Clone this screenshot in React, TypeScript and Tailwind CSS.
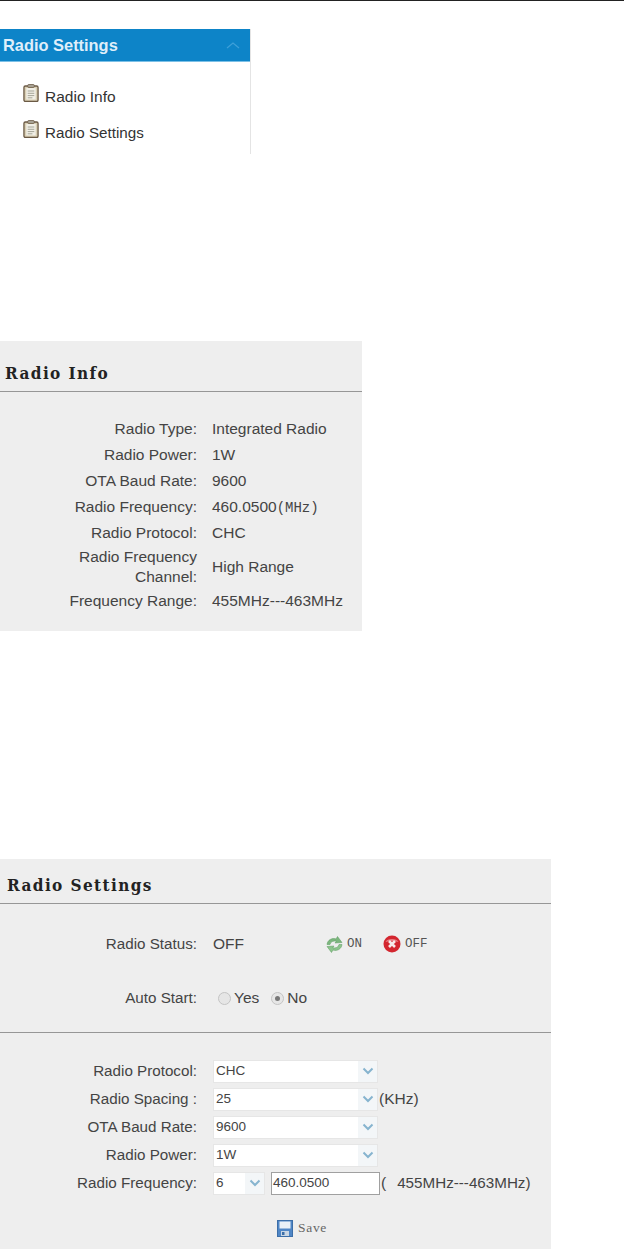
import * as React from "react";
import { FC, ReactNode } from "react";

const sans = "font-['Liberation_Sans',Arial,sans-serif]";

const ClipboardIcon: FC = () => (
  <svg width="16" height="18" viewBox="0 0 17 18" preserveAspectRatio="none" className="shrink-0">
    <rect x="1" y="2" width="15" height="15.5" rx="1.5" fill="#d9cfb4" stroke="#6b5a45" strokeWidth="1.4" />
    <rect x="3.5" y="4" width="10" height="11.5" fill="#f1efe6" />
    <rect x="5" y="0.5" width="7" height="3" rx="1" fill="#a8a294" stroke="#6b5a45" strokeWidth="0.8" />
    <path d="M5 7h7M5 9.3h7M5 11.6h7M5 13.8h5" stroke="#9a9a8c" strokeWidth="0.9" />
  </svg>
);

const Chevron: FC = () => (
  <svg width="12" height="8" viewBox="0 0 12 8">
    <path d="M1.5 1.5 6 6l4.5-4.5" fill="none" stroke="#86b4cf" strokeWidth="2" />
  </svg>
);

const RefreshIcon: FC = () => (
  <svg width="17" height="17" viewBox="0 0 17 17" className="shrink-0">
    <path d="M1 8.500C1.500 4 6 1.500 10 3l1.500-2.500L16 6.500l-7 .5 1.300-1.800C7.500 4.700 4.500 5.500 4 8.500Z" fill="#7cb67e" stroke="#5b9a5f" strokeWidth="0.5" />
    <path d="M16 8.500c-.5 4.500-5 7-9 5.500l-1.500 2.500L1 10.500l7-.5-1.300 1.800c2.800.5 5.800-.3 6.300-3.300Z" fill="#8cc48c" stroke="#5b9a5f" strokeWidth="0.5" />
  </svg>
);

const CloseIcon: FC = () => (
  <svg width="18" height="18" viewBox="0 0 18 18" className="shrink-0">
    <circle cx="9" cy="9" r="8.500" fill="#d3262f" />
    <path d="M2.500 7C4 3 14 3 15.500 7 12 5.500 6 5.500 2.500 7Z" fill="#ea7f84" />
    <path d="M6 6l6 6M12 6l-6 6" stroke="#f6eaea" strokeWidth="2.600" />
  </svg>
);

const SaveIcon: FC = () => (
  <svg width="16" height="17" viewBox="0 0 16 17" className="shrink-0">
    <rect x="0.500" y="0.500" width="15" height="16" fill="#4f86c6" stroke="#3c6ea8" />
    <rect x="2.500" y="1.500" width="11" height="7" fill="#e9f0f7" />
    <rect x="4" y="11" width="8" height="5" fill="#c9d6e4" />
    <rect x="5" y="12" width="2.500" height="3" fill="#3c6ea8" />
  </svg>
);

const RadioDot: FC<{ checked?: boolean }> = ({ checked }) => (
  <span className="flex h-[13px] w-[13px] items-center justify-center rounded-full border border-[#c4c4c4] bg-[#e6e6e6]">
    {checked && <span className="h-[5px] w-[5px] rounded-full bg-[#777]" />}
  </span>
);

const PanelTitle: FC<{ children: ReactNode; className: string }> = ({ children, className }) => (
  <div className={`border-b border-[#969696] font-['DejaVu_Serif_Condensed','DejaVu_Serif',serif] text-[17px] font-bold leading-[18px] tracking-[1.4px] text-[#222] ${className}`}>
    {children}
  </div>
);

const InfoRow: FC<{ label: ReactNode; children: ReactNode; className?: string }> = ({ label, children, className }) => (
  <div className={`flex items-center ${className ?? "h-[26px]"}`}>
    <div className="w-[197px] text-right leading-[20px] text-[#444]">{label}</div>
    <div className="ml-[15px] text-[#444]">{children}</div>
  </div>
);

const SelectBox: FC<{ value: string; className?: string }> = ({ value, className }) => (
  <div className={`flex h-[23px] items-center justify-between border border-[#e6e6e6] bg-white pl-[2px] text-[13.500px] text-[#444] ${className ?? "w-[165px]"}`}>
    <span>{value}</span>
    <span className="flex h-full w-[19px] items-center justify-center bg-[#f3f6f8]">
      <Chevron />
    </span>
  </div>
);

const FormRow: FC<{ label: string; children: ReactNode }> = ({ label, children }) => (
  <div className="flex h-[28px] items-center">
    <div className="w-[197px] text-right text-[15.200px] text-[#444]">{label}</div>
    <div className="ml-[16px] flex items-center">{children}</div>
  </div>
);

const App: FC = () => {
  return (
    <div className={`relative h-[1249px] w-[624px] overflow-hidden bg-white ${sans} text-[15.500px]`}>
      <div className="h-px bg-[#222]" />

      {/* side menu */}
      <div className="mt-[28px] h-[125px] w-[251px] border-r border-[#e4e4e4]">
        <div className="flex h-[33px] items-center justify-between border-b border-[#7cc0e6] bg-[#0d84c8] pl-[3px] pr-[10px]">
          <span className="text-[16.400px] font-bold text-[#dfeefa]">Radio Settings</span>
          <svg width="14" height="7" viewBox="0 0 14 7">
            <path d="M1 6 7 1l6 5" fill="none" stroke="#3d9fd8" strokeWidth="1.300" />
          </svg>
        </div>
        <div className="flex flex-col gap-[17px] pl-[23px] pt-[21px] text-[#333]">
          <div className="flex h-[19px] items-center gap-[6px]">
            <ClipboardIcon />
            <span className="pt-[8px]">Radio Info</span>
          </div>
          <div className="flex h-[19px] items-center gap-[6px]">
            <ClipboardIcon />
            <span className="pt-[9px] text-[15.200px]">Radio Settings</span>
          </div>
        </div>
      </div>

      {/* radio info */}
      <div className="mt-[187px] h-[290px] w-[362px] bg-[#eeeeee]">
        <PanelTitle className="pb-[9px] pl-[5px] pt-[23px]">Radio Info</PanelTitle>
        <div className="pt-[24px]">
          <InfoRow label="Radio Type:">Integrated Radio</InfoRow>
          <InfoRow label="Radio Power:">1W</InfoRow>
          <InfoRow label="OTA Baud Rate:">9600</InfoRow>
          <InfoRow label="Radio Frequency:">
            <span>460.0500</span>
            <span className="font-['Liberation_Mono',monospace] text-[14px]">(MHz)</span>
          </InfoRow>
          <InfoRow label="Radio Protocol:">CHC</InfoRow>
          <InfoRow className="h-[42px]" label={<>Radio Frequency<br />Channel:</>}>High Range</InfoRow>
          <InfoRow label="Frequency Range:">455MHz---463MHz</InfoRow>
        </div>
      </div>

      {/* radio settings */}
      <div className="mt-[228px] h-[390px] w-[551px] bg-[#eeeeee]">
        <PanelTitle className="pb-[9px] pl-[7px] pt-[17px]">Radio Settings</PanelTitle>
        <div className="h-[129px] border-b border-[#969696] pt-[27px]">
          <div className="flex h-[26px] items-center">
            <div className="w-[197px] text-right text-[15.200px] text-[#444]">Radio Status:</div>
            <div className="ml-[16px] w-[113px] text-[#444]">OFF</div>
            <div className="flex items-center gap-[4px] font-['Liberation_Mono',monospace] text-[12.500px] text-[#555]">
              <RefreshIcon />
              <span>ON</span>
            </div>
            <div className="ml-[21px] flex items-center gap-[4px] font-['Liberation_Mono',monospace] text-[12.500px] text-[#555]">
              <CloseIcon />
              <span>OFF</span>
            </div>
          </div>
          <div className="mt-[28px] flex h-[26px] items-center">
            <div className="w-[197px] text-right text-[15.200px] text-[#444]">Auto Start:</div>
            <div className="ml-[21px] flex items-center gap-[3px] text-[#444]">
              <RadioDot />
              <span>Yes</span>
              <span className="ml-[9px]"><RadioDot checked /></span>
              <span>No</span>
            </div>
          </div>
        </div>
        <div className="pt-[24px]">
          <FormRow label="Radio Protocol:">
            <SelectBox value="CHC" />
          </FormRow>
          <FormRow label="Radio Spacing :">
            <SelectBox value="25" />
            <span className="ml-[1px] text-[#444]">(KHz)</span>
          </FormRow>
          <FormRow label="OTA Baud Rate:">
            <SelectBox value="9600" />
          </FormRow>
          <FormRow label="Radio Power:">
            <SelectBox value="1W" />
          </FormRow>
          <FormRow label="Radio Frequency:">
            <SelectBox value="6" className="w-[52px]" />
            <div className="ml-[6px] flex h-[23px] w-[109px] items-center border border-[#a0a0a0] bg-white pl-[1px] text-[13.500px] text-[#444]">460.0500</div>
            <span className="ml-[1px] text-[#444]">(</span>
            <span className="ml-[11px] text-[15.200px] text-[#444]">455MHz---463MHz)</span>
          </FormRow>
          <div className="mt-[21px] flex items-center pl-[277px]">
            <SaveIcon />
            <span className="ml-[5px] font-['Liberation_Serif',serif] text-[13.500px] tracking-[0.7px] text-[#666]">Save</span>
          </div>
        </div>
      </div>
    </div>
  );
};

export default App;
